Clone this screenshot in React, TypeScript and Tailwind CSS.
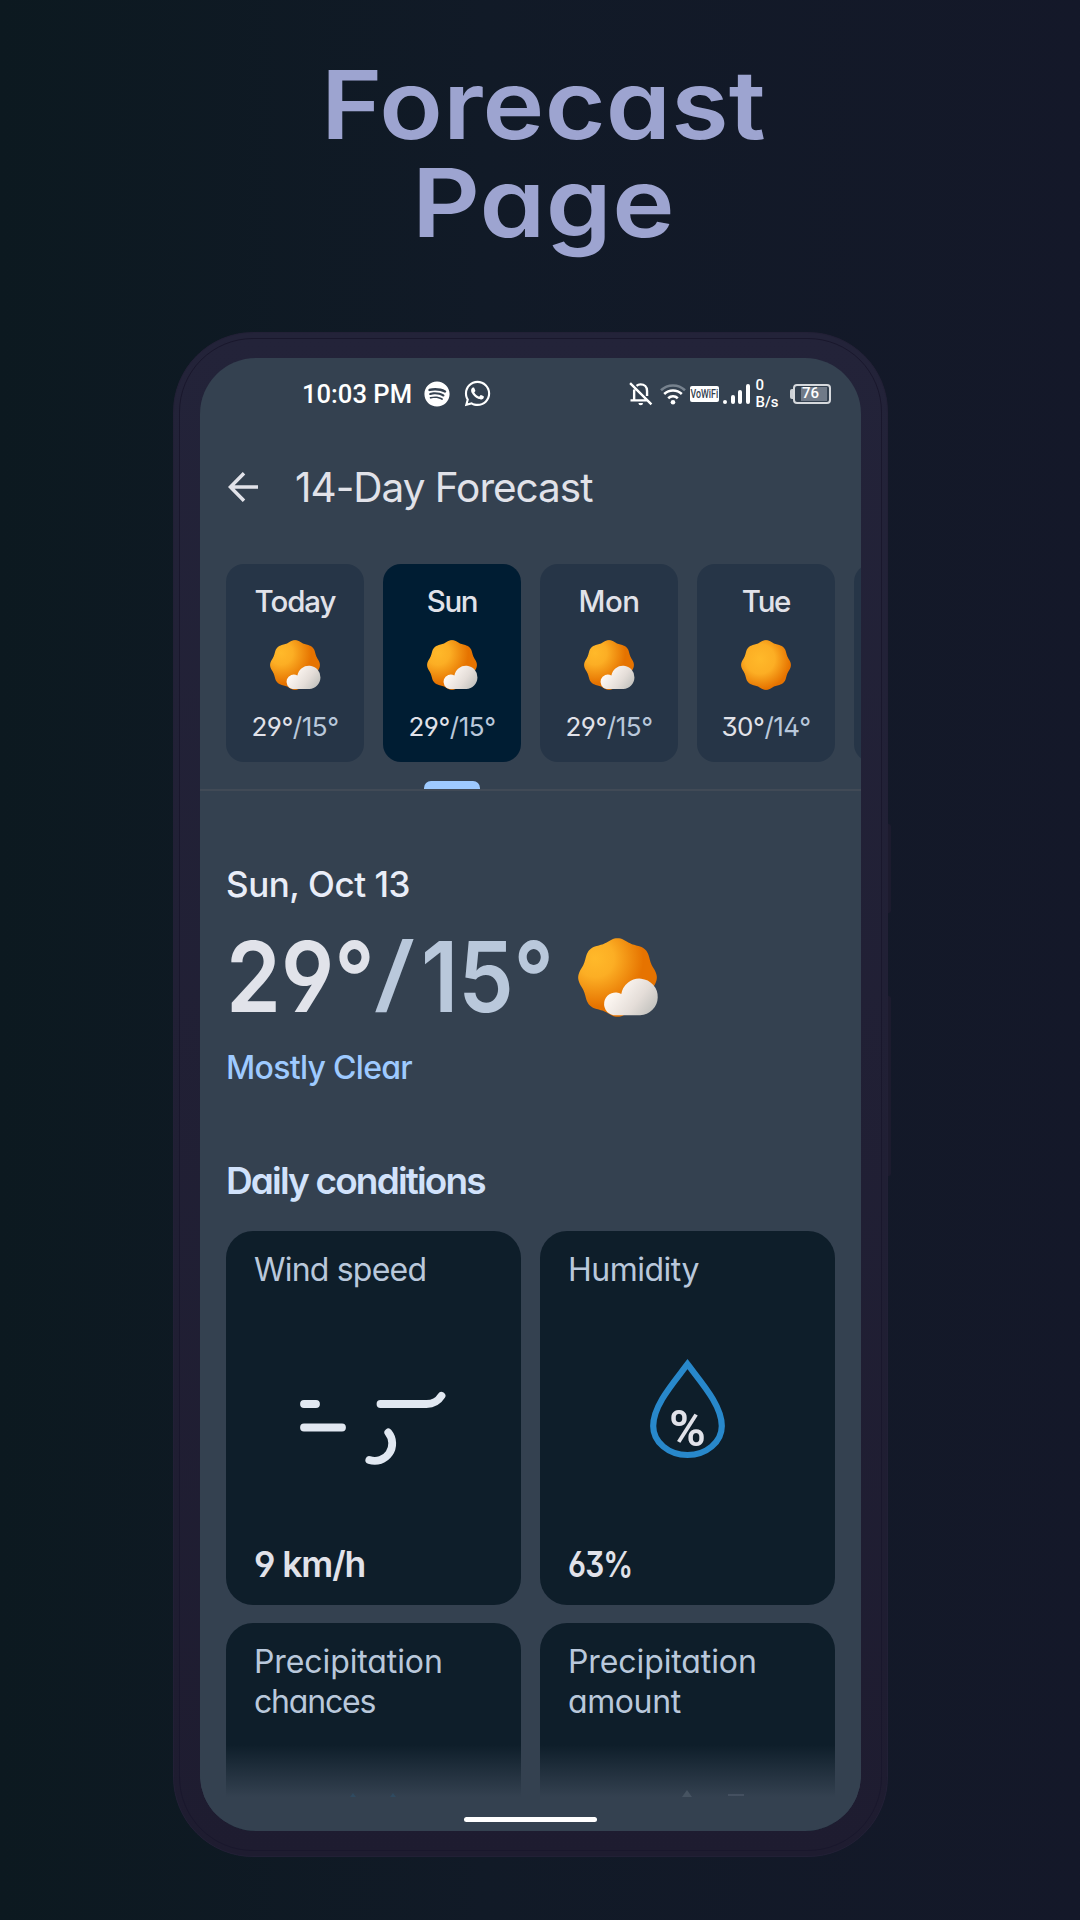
import React from 'react';
import { FaSpotify, FaWhatsapp } from 'react-icons/fa';

const sunPath = (() => {
  const points: string[] = [];
  for (let i = 0; i < 160; i++) {
    const a = (i / 160) * Math.PI * 2;
    const r = 47.9 + 1.9 * Math.cos(8 * a);
    points.push(`${(50 + r * Math.cos(a)).toFixed(2)} ${(50 + r * Math.sin(a)).toFixed(2)}`);
  }
  return `M${points.join('L')}Z`;
})();

function WeatherIcon({ id, cloudy, className }: { id: string; cloudy: boolean; className: string }) {
  return (
    <svg viewBox="0 0 102 100" className={className}>
      <defs>
        <radialGradient
          id={`sun-${id}`}
          gradientUnits="userSpaceOnUse"
          cx={cloudy ? 22 : 38}
          cy={cloudy ? 26 : 38}
          r={62}
        >
          <stop offset="0" stopColor="#ffb92a" />
          <stop offset={cloudy ? 0.38 : 0.48} stopColor="#fcae24" />
          <stop offset="0.98" stopColor="#e67300" />
        </radialGradient>
        <linearGradient id={`cloud-${id}`} gradientUnits="userSpaceOnUse" x1="46" y1="66" x2="88" y2="98">
          <stop offset="0" stopColor="#fdf7f2" />
          <stop offset="0.6" stopColor="#e4ddd8" />
          <stop offset="1" stopColor="#c6c5c1" />
        </linearGradient>
      </defs>
      <path d={sunPath} fill={`url(#sun-${id})`} />
      {cloudy && (
        <path
          d="M45 97.8A14.5 14.5 0 1 1 54.8 71A23.2 23.2 0 1 1 78.6 97.8Z"
          fill={`url(#cloud-${id})`}
        />
      )}
    </svg>
  );
}

function StatusBar() {
  return (
    <div className="flex h-[71px] w-full shrink-0 items-center text-white">
      <div className="ml-[102px] w-[122px] whitespace-nowrap pt-[2px] font-['Roboto'] text-[25.6px] font-medium">
        10:03 PM
      </div>
      <FaSpotify className="size-[26px]" />
      <FaWhatsapp className="ml-[13px] size-[29px]" />
      <svg viewBox="0 0 24 24" className="ml-[136px] size-[25px]" fill="none" stroke="white" strokeWidth="2.3">
        <path d="M8.2 4.6C9.2 3.7 10.6 3.2 12.1 3.2c3.6 0 6.2 2.7 6.2 6.3v5" />
        <path d="M5.9 8.2v9.3M2.4 18.6h16.4M2 2l20.5 20.5" />
        <path d="M10 21.2h4.4a2.2 2.2 0 0 1-4.4 0Z" fill="white" stroke="none" />
      </svg>
      <svg viewBox="0 0 26 22" className="ml-[7px] h-[22px] w-[26px]" fill="none" strokeLinecap="butt">
        <path d="M1 7.2a17.5 17.5 0 0 1 24 0" stroke="#77828e" strokeWidth="2.6" />
        <path d="M4.2 11a12.8 12.8 0 0 1 17.6 0" stroke="white" strokeWidth="2.6" />
        <path d="M8.2 15.2a7 7 0 0 1 9.6 0" stroke="white" strokeWidth="2.6" />
        <circle cx="13" cy="19.2" r="2.3" fill="white" />
      </svg>
      <div className="ml-[4px] flex h-[16px] w-[29px] items-center justify-center rounded-[2px] bg-white">
        <span className="scale-x-[0.68] font-['Roboto'] text-[13px] font-medium text-[#344150]">VoWiFi</span>
      </div>
      <div className="ml-[4px] flex h-[20px] items-end gap-[3.5px]">
        <i className="size-[4px] rounded-full bg-white" />
        <i className="h-[9px] w-[4px] rounded-[2px] bg-white" />
        <i className="h-[14px] w-[4px] rounded-[2px] bg-white" />
        <i className="h-[20px] w-[4px] rounded-[2px] bg-white" />
      </div>
      <div className="ml-[6px] w-[34px] font-['Roboto'] text-[15px] font-medium leading-[17px]">
        <div>0</div>
        <div>B/s</div>
      </div>
      <i className="h-[10px] w-[3px] rounded-l-[2px] bg-[#cdd1d6]" />
      <div className="flex h-[20px] w-[38px] items-center rounded-[4px] border-2 border-[#d6d9dd] p-[1.5px]">
        <div className="ml-[5px] flex h-[14px] w-[28px] items-center bg-[#707a88] pl-[1px]">
          <span className="font-['Roboto'] text-[15px] font-medium leading-none">76</span>
        </div>
      </div>
    </div>
  );
}

function DayCard({
  day,
  hi,
  lo,
  cloudy,
  active,
  track,
}: {
  day: string;
  hi: string;
  lo: string;
  cloudy: boolean;
  active?: boolean;
  track: string;
}) {
  return (
    <div
      className={`flex h-[198px] w-[138px] shrink-0 flex-col items-center rounded-[18px] ${
        active ? 'bg-[#001d33]' : 'bg-[#263547]'
      }`}
    >
      <div className={`mt-[17px] h-[40px] text-[29.5px] font-medium leading-[40px] text-[#e1e2e9] ${track}`}>{day}</div>
      <WeatherIcon id={day} cloudy={cloudy} className="mt-[19px] h-[50px] w-[51px] shrink-0" />
      <div className="mt-[21px] h-[32px] whitespace-nowrap text-[26px] leading-[32px] tracking-[-0.5px] text-[#e1e2e9] [font-feature-settings:'ss01']">
        {hi}°<span className="text-[#b9c8db]">/{lo}°</span>
      </div>
    </div>
  );
}

const labelText = "text-[32px] leading-[40px] text-[#b9c8db] [font-feature-settings:'cv11']";
const valueText =
  "h-[40px] text-[35.5px] font-semibold leading-[40px] text-[#e1e2e9] [font-feature-settings:'cv11','ss01']";

export default function App() {
  return (
    <div className="flex h-[1920px] w-[1080px] flex-col overflow-hidden bg-linear-to-r from-[#0c1920] via-[#111a27] via-45% to-[#141829] font-['Inter',sans-serif]">
      <h1 className="mt-[56px] h-[276px] w-full pl-[7px] text-center text-[95px] font-semibold leading-[98px] text-[#9da4d0] [font-feature-settings:'cv11']">
        <div className="scale-x-[1.1] tracking-[0.2px]">Forecast</div>
        <div className="scale-x-[1.11] tracking-[0.4px]">Page</div>
      </h1>

      <div className="relative ml-[172.5px] h-[1524.5px] w-[715px] shrink-0 rounded-[80px] border border-[#222036] bg-[#222137] bg-linear-to-b from-[#232339] to-[#1e1c30] pl-[26.5px] pt-[25px]">
        <div className="pointer-events-none absolute inset-[5px] rounded-[74px] border border-[#19172c]" />
        <div className="absolute -right-[4px] top-[491px] h-[89px] w-[3px] rounded-r-[2px] bg-[#1c1b2e]" />
        <div className="absolute -right-[4px] top-[663px] h-[180px] w-[3px] rounded-r-[2px] bg-[#1c1b2e]" />

        <div className="relative flex h-[1473px] w-[661px] flex-col overflow-hidden rounded-[56px] bg-[#344150]">
          <StatusBar />

          <div className="flex h-[116px] shrink-0 items-center">
            <svg viewBox="0 0 30 30" className="ml-[28px] size-[30px]" fill="none" stroke="#e1e2e9" strokeWidth="3.5">
              <path d="M2.5 15H30M16 1.2L2.4 15L16 28.8" />
            </svg>
            <h2 className="ml-[37px] whitespace-nowrap pt-[2px] text-[40.5px] leading-[50px] tracking-[-1px] text-[#e1e2e9]">
              14-Day Forecast
            </h2>
          </div>

          <div className="mt-[19px] flex shrink-0 gap-[19px] pl-[26px]">
            <DayCard day="Today" hi="29" lo="15" cloudy track="tracking-[-1.1px]" />
            <DayCard day="Sun" hi="29" lo="15" cloudy active track="tracking-[-1.3px]" />
            <DayCard day="Mon" hi="29" lo="15" cloudy track="tracking-[-0.5px]" />
            <DayCard day="Tue" hi="30" lo="14" cloudy={false} track="tracking-[-1.3px]" />
            <div className="h-[198px] w-[138px] shrink-0 rounded-[18px] bg-[#263547]" />
          </div>
          <div className="mt-[19px] h-[8px] w-full shrink-0 pl-[224px]">
            <div className="h-[8px] w-[56px] rounded-t-[7px] bg-[#9ecaff]" />
          </div>
          <div className="h-[2px] w-full shrink-0 bg-[#414a56]" />

          <section className="flex shrink-0 flex-col pl-[26px]">
            <div className="mt-[73px] h-[40px] text-[35px] font-medium leading-[40px] tracking-[-0.45px] text-[#e9edf8]">
              Sun, Oct 13
            </div>
            <div className="mt-[23px] flex h-[100px] items-center text-[98px] font-semibold leading-[100px] [font-feature-settings:'ss01']">
              <span className="w-[147px] origin-left scale-x-[0.9] text-[#e1e3ea]">29°</span>
              <span className="w-[48px] origin-left scale-x-[1.38] pb-[8px] text-[84px] font-medium text-[#b9c8db]">/</span>
              <span className="w-[157px] origin-left scale-x-[0.9] text-[#b9c8db]">15°</span>
              <WeatherIcon id="main" cloudy className="h-[79px] w-[80.6px] shrink-0" />
            </div>
            <div className="mt-[21px] h-[40px] text-[32px] font-medium leading-[40px] tracking-[-0.7px] text-[#9ecaff] [font-feature-settings:'cv11']">
              Mostly Clear
            </div>
            <h3 className="mt-[71px] h-[44px] text-[37px] font-semibold leading-[44px] tracking-[-1.85px] text-[#d1e2fb] [font-feature-settings:'cv11']">
              Daily conditions
            </h3>
          </section>

          <div className="mt-[28px] grid shrink-0 grid-cols-[295px_295px] gap-x-[19px] gap-y-[17.5px] pl-[26px]">
            <div className="flex h-[374px] flex-col justify-between rounded-[27px] bg-[#0e1e2a] pb-[20px] pl-[28px] pt-[19px]">
              <div className={`tracking-[-0.8px] ${labelText}`}>Wind speed</div>
              <svg
                viewBox="0 0 146 76"
                className="ml-[46px] mt-[21px] h-[76px] w-[146px]"
                fill="none"
                stroke="#e1e8f1"
                strokeWidth="7.8"
                strokeLinecap="round"
              >
                <path d="M4 14H16M4 37.5H42M80.5 14H126.5C133 14 138 11.5 141.5 5.8" />
                <path d="M88.3 42.5A17.4 17.4 0 0 1 69.3 70" />
              </svg>
              <div className={`tracking-[-1.1px] ${valueText}`}>9 km/h</div>
            </div>
            <div className="flex h-[374px] flex-col rounded-[27px] bg-[#0e1e2a] pb-[20px] pl-[28px] pt-[19px]">
              <div className={`h-[40px] tracking-[-0.5px] ${labelText}`}>Humidity</div>
              <div className="relative ml-[81px] mt-[69px] h-[100px] w-[77px]">
                <svg viewBox="0 0 77 100" className="size-full" fill="none" stroke="#2888cb" strokeWidth="6.2">
                  <path d="M38.5 5.2C24 24.5 4.2 46.5 4.2 67A34.3 29 0 0 0 72.8 67C72.8 46.5 53 24.5 38.5 5.2Z" />
                </svg>
                <span className="absolute inset-x-0 top-[45px] text-center font-['Roboto'] text-[50px] font-semibold leading-[50px] text-[#e1e2e9]">
                  %
                </span>
              </div>
              <div className={`mt-auto origin-left scale-x-[0.84] tracking-[-1px] ${valueText}`}>63%</div>
            </div>
            <div className="h-[374px] rounded-[27px] bg-[#0e1e2a] pl-[28px] pt-[19px]">
              <div className={labelText}>
                <div className="tracking-[-0.1px]">Precipitation</div>
                <div className="tracking-[-1.2px]">chances</div>
              </div>
            </div>
            <div className="h-[374px] rounded-[27px] bg-[#0e1e2a] pl-[28px] pt-[19px]">
              <div className={labelText}>
                <div className="tracking-[-0.1px]">Precipitation</div>
                <div className="tracking-[-0.4px]">amount</div>
              </div>
            </div>
          </div>

          <div className="absolute inset-x-0 bottom-0 flex h-[86px] flex-col items-center">
            <div className="h-[52px] w-full shrink-0 bg-linear-to-b from-[#344150]/0 to-[#344150]" />
            <div className="h-[20px] w-full shrink-0 bg-[#344150]" />
            <div className="flex w-full flex-1 justify-center bg-[#344150]">
              <div className="h-[4.5px] w-[133px] rounded-full bg-white" />
            </div>
            <svg viewBox="0 0 661 8" className="absolute left-0 top-[44px] h-[8px] w-[661px]">
              <path d="M150 8L153 4L156 8ZM190 8L193 4L196 8Z" fill="#2f4a60" />
              <path d="M482 8L487 1L492 8Z" fill="#465361" />
              <path d="M528 5H544V7H528Z" fill="#445060" />
            </svg>
          </div>
        </div>
      </div>
    </div>
  );
}
